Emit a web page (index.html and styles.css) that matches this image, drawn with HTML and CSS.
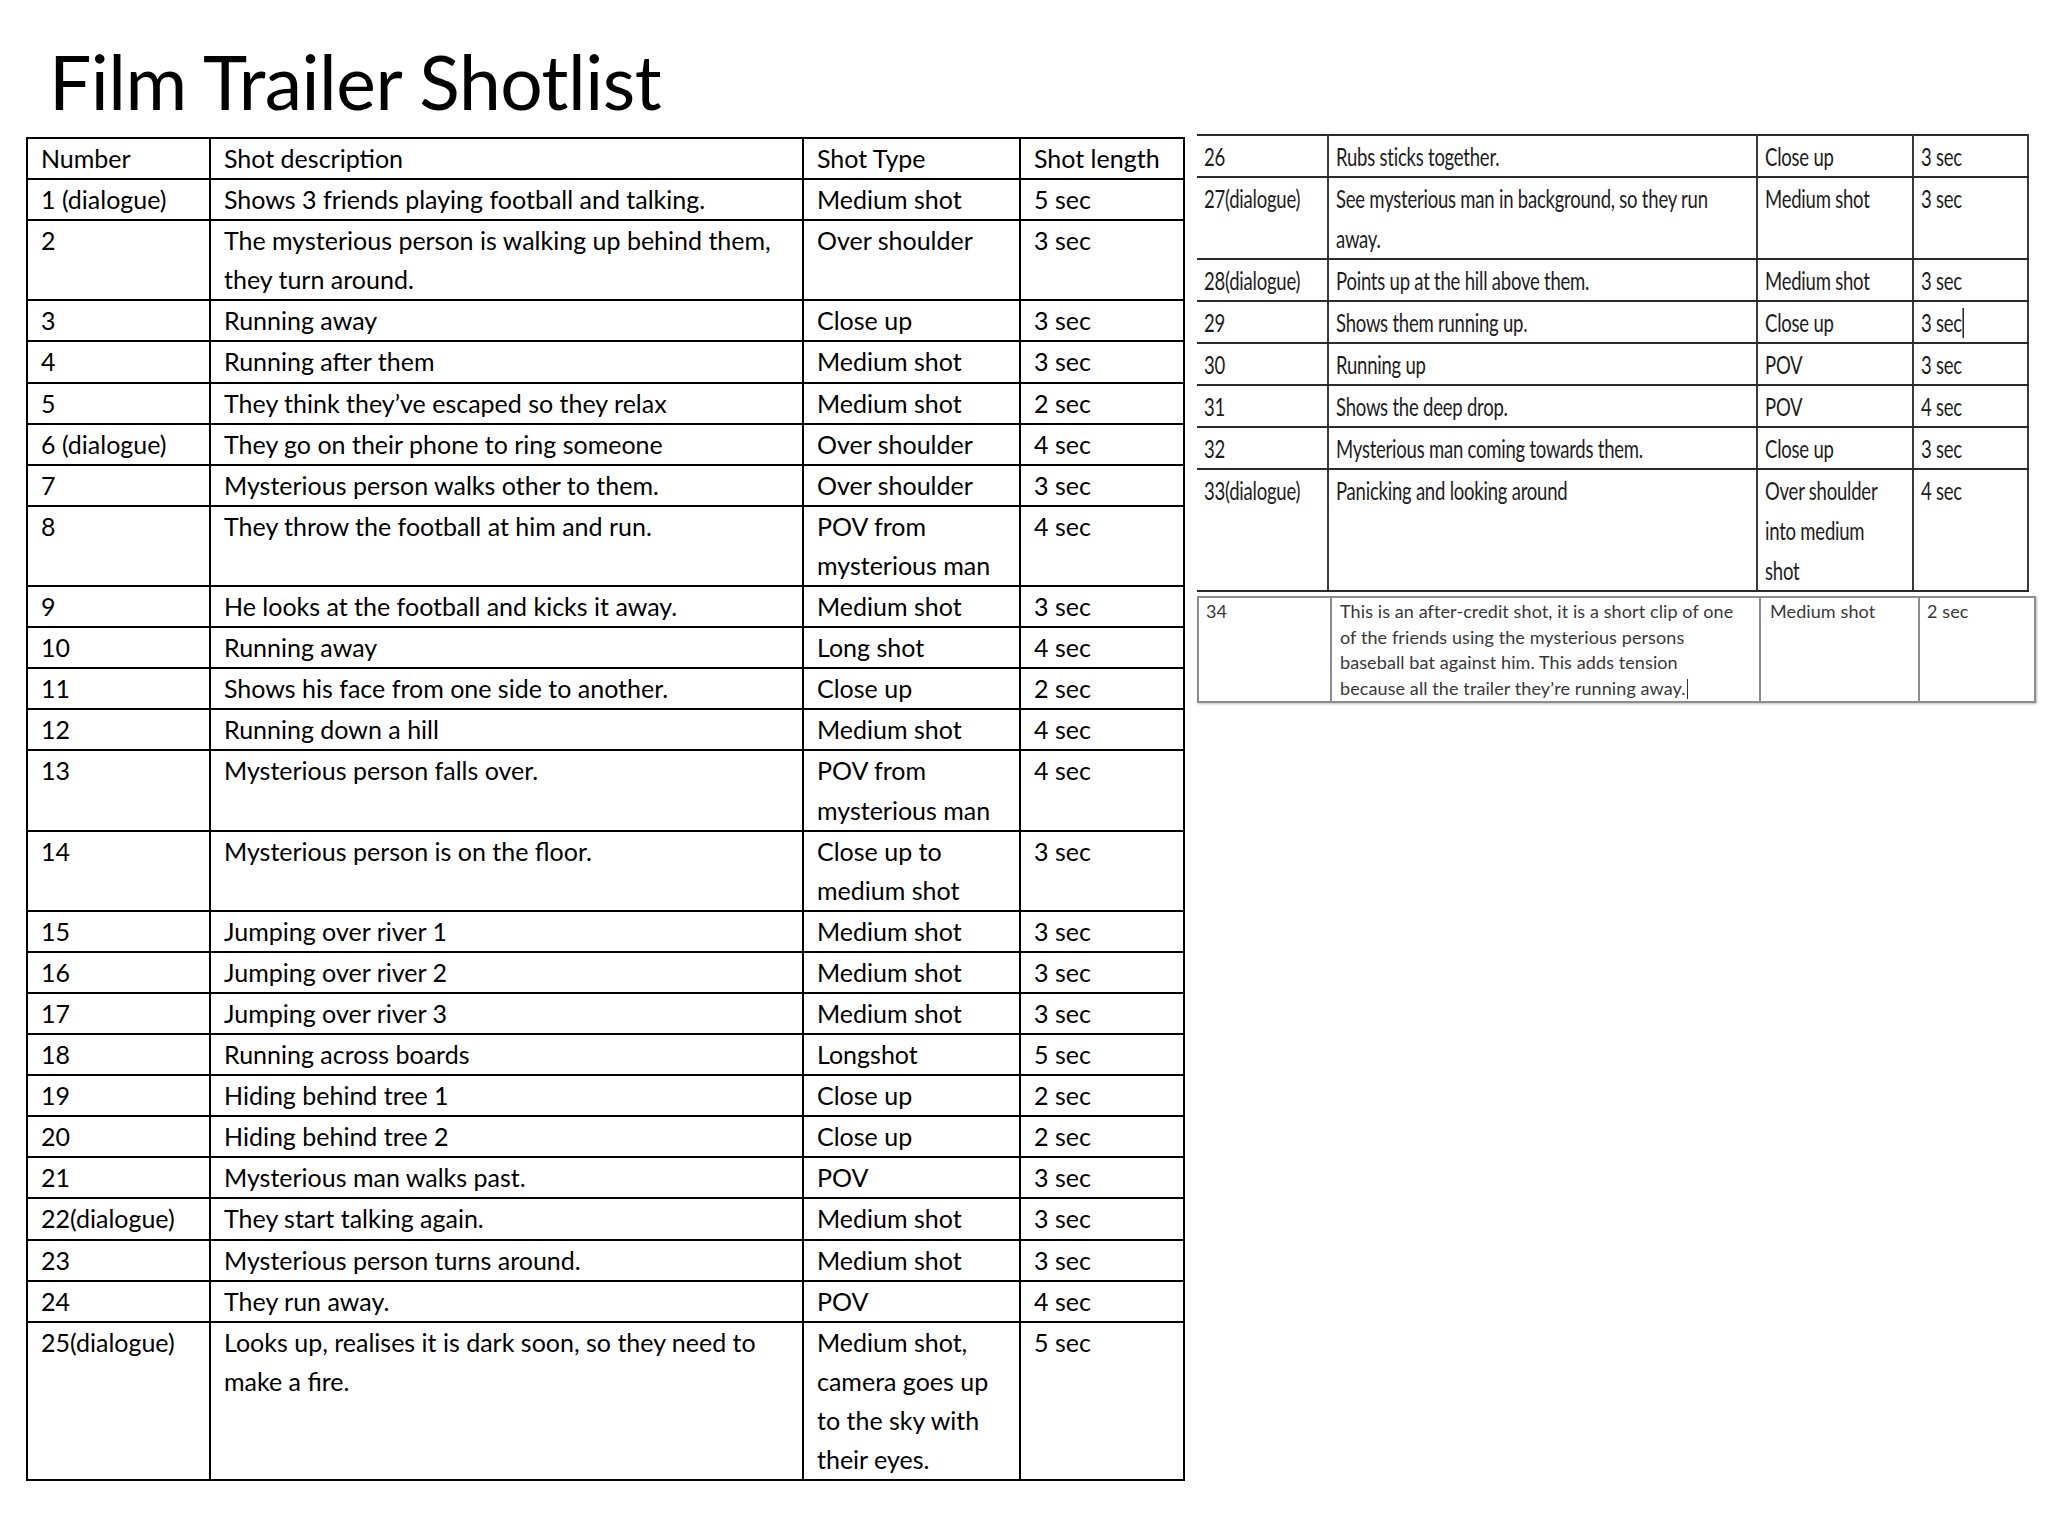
FILE: index.html
```html
<!DOCTYPE html>
<html lang="en">
<head>
<meta charset="utf-8">
<title>Film Trailer Shotlist</title>
<link rel="stylesheet" href="styles.css">
</head>
<body>
<main class="slide">
  <h1 class="title">Film Trailer Shotlist</h1>
  <div class="tables">
    <table class="shots">
      <colgroup><col class="c1"><col class="c2"><col class="c3"><col class="c4"></colgroup>
      <tbody>
        <tr><td>Number</td><td>Shot description</td><td>Shot Type</td><td>Shot length</td></tr>
        <tr><td>1 (dialogue)</td><td>Shows 3 friends playing football and talking.</td><td>Medium shot</td><td>5 sec</td></tr>
        <tr><td>2</td><td>The mysterious person is walking up behind them,<br>they turn around.</td><td>Over shoulder</td><td>3 sec</td></tr>
        <tr><td>3</td><td>Running away</td><td>Close up</td><td>3 sec</td></tr>
        <tr><td>4</td><td>Running after them</td><td>Medium shot</td><td>3 sec</td></tr>
        <tr><td>5</td><td>They think they’ve escaped so they relax</td><td>Medium shot</td><td>2 sec</td></tr>
        <tr><td>6 (dialogue)</td><td>They go on their phone to ring someone</td><td>Over shoulder</td><td>4 sec</td></tr>
        <tr><td>7</td><td>Mysterious person walks other to them.</td><td>Over shoulder</td><td>3 sec</td></tr>
        <tr><td>8</td><td>They throw the football at him and run.</td><td>POV from<br>mysterious man</td><td>4 sec</td></tr>
        <tr><td>9</td><td>He looks at the football and kicks it away.</td><td>Medium shot</td><td>3 sec</td></tr>
        <tr><td>10</td><td>Running away</td><td>Long shot</td><td>4 sec</td></tr>
        <tr><td>11</td><td>Shows his face from one side to another.</td><td>Close up</td><td>2 sec</td></tr>
        <tr><td>12</td><td>Running down a hill</td><td>Medium shot</td><td>4 sec</td></tr>
        <tr><td>13</td><td>Mysterious person falls over.</td><td>POV from<br>mysterious man</td><td>4 sec</td></tr>
        <tr><td>14</td><td>Mysterious person is on the floor.</td><td>Close up to<br>medium shot</td><td>3 sec</td></tr>
        <tr><td>15</td><td>Jumping over river 1</td><td>Medium shot</td><td>3 sec</td></tr>
        <tr><td>16</td><td>Jumping over river 2</td><td>Medium shot</td><td>3 sec</td></tr>
        <tr><td>17</td><td>Jumping over river 3</td><td>Medium shot</td><td>3 sec</td></tr>
        <tr><td>18</td><td>Running across boards</td><td>Longshot</td><td>5 sec</td></tr>
        <tr><td>19</td><td>Hiding behind tree 1</td><td>Close up</td><td>2 sec</td></tr>
        <tr><td>20</td><td>Hiding behind tree 2</td><td>Close up</td><td>2 sec</td></tr>
        <tr><td>21</td><td>Mysterious man walks past.</td><td>POV</td><td>3 sec</td></tr>
        <tr><td>22(dialogue)</td><td>They start talking again.</td><td>Medium shot</td><td>3 sec</td></tr>
        <tr><td>23</td><td>Mysterious person turns around.</td><td>Medium shot</td><td>3 sec</td></tr>
        <tr><td>24</td><td>They run away.</td><td>POV</td><td>4 sec</td></tr>
        <tr><td>25(dialogue)</td><td>Looks up, realises it is dark soon, so they need to<br>make a fire.</td><td>Medium shot,<br>camera goes up<br>to the sky with<br>their eyes.</td><td>5 sec</td></tr>
      </tbody>
    </table>

    <div class="side">
      <table class="shots-b">
        <colgroup><col class="d1"><col class="d2"><col class="d3"><col class="d4"></colgroup>
        <tbody>
          <tr><td><span class="cond">26</span></td><td><span class="cond">Rubs sticks together.</span></td><td><span class="cond">Close up</span></td><td><span class="cond">3 sec</span></td></tr>
          <tr><td><span class="cond">27(dialogue)</span></td><td><span class="cond">See mysterious man in background, so they run<br>away.</span></td><td><span class="cond">Medium shot</span></td><td><span class="cond">3 sec</span></td></tr>
          <tr><td><span class="cond">28(dialogue)</span></td><td><span class="cond">Points up at the hill above them.</span></td><td><span class="cond">Medium shot</span></td><td><span class="cond">3 sec</span></td></tr>
          <tr><td><span class="cond">29</span></td><td><span class="cond">Shows them running up.</span></td><td><span class="cond">Close up</span></td><td><span class="cond">3 sec<i class="caret"></i></span></td></tr>
          <tr><td><span class="cond">30</span></td><td><span class="cond">Running up</span></td><td><span class="cond">POV</span></td><td><span class="cond">3 sec</span></td></tr>
          <tr><td><span class="cond">31</span></td><td><span class="cond">Shows the deep drop.</span></td><td><span class="cond">POV</span></td><td><span class="cond">4 sec</span></td></tr>
          <tr><td><span class="cond">32</span></td><td><span class="cond">Mysterious man coming towards them.</span></td><td><span class="cond">Close up</span></td><td><span class="cond">3 sec</span></td></tr>
          <tr><td><span class="cond">33(dialogue)</span></td><td><span class="cond">Panicking and looking around</span></td><td><span class="cond">Over shoulder<br>into medium<br>shot</span></td><td><span class="cond">4 sec</span></td></tr>
        </tbody>
      </table>

      <table class="shots-c">
        <colgroup><col class="e1"><col class="e2"><col class="e3"><col class="e4"></colgroup>
        <tbody>
          <tr><td>34</td><td>This is an after-credit shot, it is a short clip of one<br>of the friends using the mysterious persons<br>baseball bat against him. This adds tension<br>because all the trailer they’re running away.<i class="caret caret-s"></i></td><td>Medium shot</td><td>2 sec</td></tr>
        </tbody>
      </table>
    </div>
  </div>
</main>
</body>
</html>
```

FILE: styles.css
```css
html, body {
  margin: 0;
  padding: 0;
  background: #ffffff;
}

.slide {
  width: 2048px;
  height: 1536px;
  padding-left: 26px;
  box-sizing: border-box;
  font-family: "Lato", "Open Sans", "Liberation Sans", sans-serif;
  color: #000;
}

.title {
  margin: 0;
  padding: 41px 0 0 23px;
  height: 80px;
  font-family: "Lato", "Liberation Sans", sans-serif;
  font-weight: 400;
  font-size: 75px;
  line-height: 80px;
  letter-spacing: -0.5px;
  color: #000;
}

.tables {
  display: flex;
  align-items: flex-start;
  gap: 12px;
  margin-top: 16px;
}

/* main (left) table */
.shots {
  border-collapse: collapse;
  table-layout: fixed;
  width: 1157px;
  font-size: 25px;
  line-height: 39.1px;
}
.shots .c1 { width: 183px; }
.shots .c2 { width: 593px; }
.shots .c3 { width: 217px; }
.shots .c4 { width: 164px; }
.shots td {
  border: 2px solid #000;
  padding: 0 0 0 13px;
  vertical-align: top;
  white-space: nowrap;
  overflow: hidden;
}

/* right-hand pasted tables */
.side {
  display: flex;
  flex-direction: column;
  gap: 4px;
  margin-top: -3px;
}

.shots-b {
  border-collapse: collapse;
  table-layout: fixed;
  width: 831px;
  font-size: 25px;
  line-height: 40px;
  color: #1c1c1c;
}
.shots-b .d1 { width: 131px; }
.shots-b .d2 { width: 429px; }
.shots-b .d3 { width: 156px; }
.shots-b .d4 { width: 115px; }
.shots-b td {
  border-top: 2px solid #2a2a2a;
  border-bottom: 2px solid #2a2a2a;
  border-left: 2px solid #3a3a3a;
  border-right: 2px solid #3a3a3a;
  padding: 0 0 0 7px;
  vertical-align: top;
  white-space: nowrap;
  overflow: hidden;
}
.shots-b td:first-child { border-left: none; }

.cond {
  display: inline-block;
  transform: scaleX(0.74);
  transform-origin: 0 0;
  letter-spacing: -0.3px;
}

.caret {
  display: inline-block;
  width: 2px;
  height: 30px;
  background: #222;
  vertical-align: -6px;
  margin-left: 1px;
}

.shots-c {
  border-collapse: collapse;
  table-layout: fixed;
  width: 837px;
  font-size: 18px;
  line-height: 25.5px;
  color: #383838;
  box-shadow: 1px 1px 2px rgba(0,0,0,0.25);
}
.shots-c .e1 { width: 133px; }
.shots-c .e2 { width: 429px; }
.shots-c .e3 { width: 159px; }
.shots-c .e4 { width: 116px; }
.shots-c td {
  border: 2px solid #8c8c8c;
  padding: 1px 0 0 8px;
  vertical-align: top;
  white-space: nowrap;
  overflow: hidden;
  letter-spacing: 0.1px;
}
.shots-c td:first-child { padding-left: 7px; }
.shots-c td:nth-child(3) { padding-left: 9px; }
.shots-c td:nth-child(4) { padding-left: 7px; }

.caret-s {
  height: 20px;
  width: 1px;
  vertical-align: -4px;
  background: #333;
}
```
